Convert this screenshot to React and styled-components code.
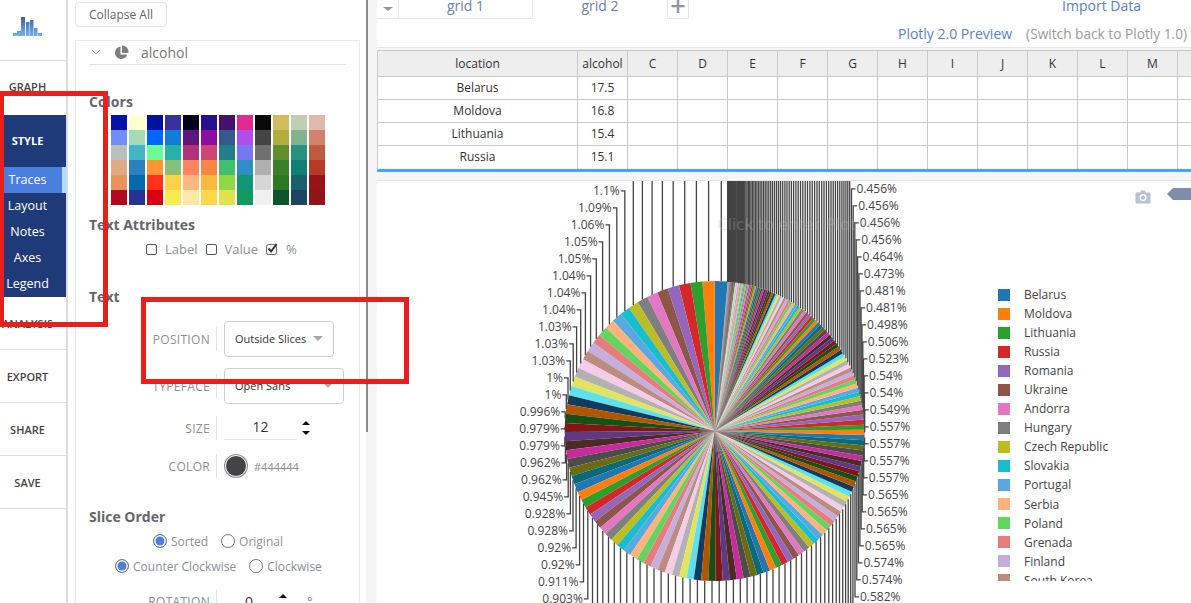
import React from 'react'
import styled, { createGlobalStyle } from 'styled-components'

const NAVY = '#1f3a78'
const LINK = '#5b80c9'
const LABEL = '#8a8f96'
const HEADING = '#63676d'
const BORDER = '#c9c9c9'

const SWATCHES = [
  ['#0512ab', '#ffffd0', '#00129b', '#37319a', '#03021a', '#2a0f8e', '#46116a', '#e02a8f', '#0a0a0a', '#d2bb5c', '#c0cfb4', '#e0b8ae'],
  ['#6f8ef8', '#a3dcb5', '#0066ff', '#137bd8', '#5f1780', '#8b0ea0', '#345a8d', '#b14ced', '#444444', '#b3ad3c', '#80b48e', '#d1836e'],
  ['#bdbdbd', '#40b7c8', '#66ff90', '#26b3a7', '#b03378', '#ce4673', '#217f8b', '#7878ee', '#707070', '#5f8f2d', '#26917e', '#c05a3c'],
  ['#dfab85', '#2c81bc', '#ff9635', '#8abf76', '#ff8460', '#f78645', '#40bf70', '#2e8fc4', '#b0b0b0', '#3a8028', '#0f8078', '#b63a25'],
  ['#e8925c', '#0769ad', '#ff301c', '#ffd147', '#ffb980', '#fdb93d', '#90d845', '#0f9878', '#d6d6d6', '#28791f', '#1a5f6a', '#961319'],
  ['#b00a1e', '#253494', '#d90413', '#f7ec4e', '#fde8a6', '#fbd84a', '#dfe24c', '#14995f', '#f0f0f0', '#0d552a', '#1e455f', '#92131a'],
]

const PIE_COLORS = [
  '#1f77b4', '#ff7f0e', '#2ca02c', '#d62728', '#9467bd', '#8c564b', '#e377c2', '#7f7f7f', '#bcbd22', '#17becf',
  '#58a9e2', '#ffb27b', '#5fd75f', '#e77c7c', '#c6aedc', '#bc8b81', '#f4cce8', '#b2b2b2', '#e2e35f', '#5fe0ed',
  '#103d5d', '#b35500', '#165016', '#811616', '#5e3a84', '#4a2c27', '#cb2a9c', '#4c4c4c', '#6b6b13', '#0d6975',
]

const LEGEND = [
  'Belarus', 'Moldova', 'Lithuania', 'Russia', 'Romania', 'Ukraine', 'Andorra', 'Hungary',
  'Czech Republic', 'Slovakia', 'Portugal', 'Serbia', 'Poland', 'Grenada', 'Finland', 'South Korea',
]

const COLUMNS = ['C', 'D', 'E', 'F', 'G', 'H', 'I', 'J', 'K', 'L', 'M', '']
const ROWS = [
  ['Belarus', '17.5'],
  ['Moldova', '16.8'],
  ['Lithuania', '15.4'],
  ['Russia', '15.1'],
]

const HEAD = [1.39, 1.33, 1.28, 1.26, 1.25, 1.2, 1.17, 1.15, 1.12]
const LEFT_LABELS = [1.1, 1.09, 1.06, 1.05, 1.05, 1.04, 1.04, 1.04, 1.03, 1.03, 1.03, 1, 1, 0.996, 0.979, 0.979, 0.962, 0.962, 0.945, 0.928, 0.928, 0.92, 0.92, 0.911, 0.903]
const RIGHT_LABELS = [0.456, 0.456, 0.456, 0.456, 0.464, 0.473, 0.481, 0.481, 0.498, 0.506, 0.523, 0.54, 0.54, 0.549, 0.557, 0.557, 0.557, 0.557, 0.565, 0.565, 0.565, 0.565, 0.574, 0.574, 0.582]
const LOGO_BARS = [[0, 4, 3], [4, 4, 5], [8, 4, 19], [13, 3.500, 14], [17, 3.500, 16], [21, 3.500, 8], [25, 4, 3]]

const CX = 715.7
const CY = 430
const R = 150

const buildSlices = () => {
  const mid = Array.from({ length: 47 }, (_, i) => 0.89 - (0.3 * i) / 46)
  const tail = Array.from({ length: 85 }, (_, i) => 0.005 + 0.44 * Math.pow(1 - i / 85, 1.32))
  const right = [...RIGHT_LABELS].reverse()
  const values = [...HEAD, ...LEFT_LABELS, ...mid, ...right, ...tail]
  const total = values.reduce((a, b) => a + b, 0)
  const rightStart = HEAD.length + LEFT_LABELS.length + mid.length
  let cum = -5
  return values.map((v, i) => {
    const start = cum
    cum += (v / total) * 360
    const a = ((start + cum) / 2) * (Math.PI / 180)
    const onLeft = (start + cum) / 2 < 180
    const x = CX - R * Math.sin(a)
    const y = CY - R * Math.cos(a)
    const labelY = onLeft ? 189.8 + 17 * (i - HEAD.length) : 595.8 - 17 * (i - rightStart)
    let label = null
    if (i >= HEAD.length && i < HEAD.length + LEFT_LABELS.length) label = LEFT_LABELS[i - HEAD.length]
    if (i >= rightStart && i < rightStart + right.length) label = right[i - rightStart]
    return { i, start, end: cum, x, y, labelY, onLeft, label }
  })
}

const wedge = ({ start, end }) => {
  const p = (deg) => {
    const a = (deg * Math.PI) / 180
    return `${(CX - R * Math.sin(a)).toFixed(2)} ${(CY - R * Math.cos(a)).toFixed(2)}`
  }
  return `M${CX} ${CY}L${p(start)}A${R} ${R} 0 0 0 ${p(end)}Z`
}

const SLICES = buildSlices()

const PieChart = () => (
  <ChartSvg viewBox="378 180 813 423">
    {SLICES.map((s) => (
      <path key={s.i} d={wedge(s)} fill={PIE_COLORS[s.i % 30]} />
    ))}
    {SLICES.map((s) => {
      const tick = s.onLeft ? -4 : 4
      return (
        <path
          key={s.i}
          d={`M${s.x.toFixed(1)} ${s.y.toFixed(1)}V${s.labelY.toFixed(1)}h${tick}`}
          fill="none"
          stroke="#444"
          strokeWidth="1.3"
        />
      )
    })}
    {SLICES.filter((s) => s.label !== null).map((s) => (
      <ChartLabel
        key={s.i}
        x={s.onLeft ? s.x - 5 : s.x + 5}
        y={s.labelY + 4}
        textAnchor={s.onLeft ? 'end' : 'start'}
      >
        {s.label}%
      </ChartLabel>
    ))}
    <PlotTitle x="805" y="229" textAnchor="middle">Click to enter Plot title</PlotTitle>
  </ChartSvg>
)

const Logo = () => (
  <svg width="29" height="19" viewBox="0 0 29 19">
    <defs>
      <linearGradient id="logoBars" x1="0" y1="0" x2="0" y2="19" gradientUnits="userSpaceOnUse">
        <stop offset="0" stopColor="#3d628f" />
        <stop offset="1" stopColor="#6fb2f7" />
      </linearGradient>
    </defs>
    {LOGO_BARS.map(([x, w, h]) => (
      <rect key={x} x={x} y={19 - h} width={w} height={h} fill="url(#logoBars)" />
    ))}
  </svg>
)

const PieIcon = () => (
  <svg width="15" height="15" viewBox="0 0 15 15">
    <path d="M6.5 1.5a6.3 6.3 0 1 0 6.8 8H6.5z" fill="#7f7f7f" />
    <path d="M8 0.5a6.5 6.5 0 0 1 6.5 7.5H8z" fill="#7f7f7f" />
  </svg>
)

const Chevron = () => (
  <svg width="10" height="6" viewBox="0 0 10 6">
    <path d="M1 1l4 4 4-4" fill="none" stroke="#999" strokeWidth="1" />
  </svg>
)

const Spinner = () => (
  <SpinnerBox>
    <svg width="8" height="14" viewBox="0 0 8 14">
      <path d="M4 0l4 4H0zM4 14l4-4H0z" fill="#111" />
    </svg>
  </SpinnerBox>
)

const Check = () => (
  <svg width="12" height="12" viewBox="0 0 12 12">
    <rect x="0.5" y="1.5" width="10" height="10" rx="2" fill="#f4f4f4" stroke="#666" />
    <path d="M2.5 5.5l2.6 3 5.5-7.5" fill="none" stroke="#333" strokeWidth="2" />
  </svg>
)

const Camera = () => (
  <svg width="16" height="14" viewBox="0 0 16 14">
    <path d="M1.5 2.5H5L6 0.5h4l1 2h3.500a1 1 0 0 1 1 1v9a1 1 0 0 1-1 1h-13a1 1 0 0 1-1-1v-9a1 1 0 0 1 1-1z" fill="#b9c1d5" />
    <circle cx="8" cy="7.600" r="3.500" fill="#fff" />
    <circle cx="8" cy="7.600" r="2.200" fill="#b9c1d5" />
  </svg>
)

const App = () => (
  <Page>
    <GlobalStyle />
    <Rail>
      <LogoBox><Logo /></LogoBox>
      <RailItem $height={54} $lift={3}>GRAPH</RailItem>
      <StyleGroup>
        <StyleTitle>STYLE</StyleTitle>
        <SubItem $active>Traces</SubItem>
        <SubItem>Layout</SubItem>
        <SubItem>Notes</SubItem>
        <SubItem>Axes</SubItem>
        <SubItem>Legend</SubItem>
      </StyleGroup>
      <RailItem $height={53} $line>ANALYSIS</RailItem>
      <RailItem $height={53} $line>EXPORT</RailItem>
      <RailItem $height={53} $line>SHARE</RailItem>
      <RailItem $height={53} $line>SAVE</RailItem>
    </Rail>

    <Panel>
      <CollapseButton>Collapse All</CollapseButton>
      <Card>
        <CardHeader>
          <Chevron />
          <PieIcon />
          <CardName>alcohol</CardName>
        </CardHeader>
        <Heading $top={27}>Colors</Heading>
        <SwatchGrid>
          {SWATCHES.flat().map((c, i) => (
            <Swatch key={i} $color={c} />
          ))}
        </SwatchGrid>
        <Heading $top={10}>Text Attributes</Heading>
        <CheckRow>
          <CheckItem><EmptyBox />Label</CheckItem>
          <CheckItem><EmptyBox />Value</CheckItem>
          <CheckItem><Check />%</CheckItem>
        </CheckRow>
        <Heading $top={28}>Text</Heading>
        <Field $top={14} $height={36} label="POSITION">
          <Select $width={110}>Outside Slices<Caret /></Select>
        </Field>
        <Field $top={11} $height={36} label="TYPEFACE">
          <Select $width={120}>Open Sans<Caret /></Select>
        </Field>
        <Field $top={12} $height={24} label="SIZE">
          <SizeInput>12</SizeInput>
          <Spinner />
        </Field>
        <Field $top={14} $height={24} label="COLOR">
          <ColorDot />
          <HexText>#444444</HexText>
        </Field>
        <Heading $top={29}>Slice Order</Heading>
        <RadioRow $top={4} $left={64}>
          <RadioItem><Radio $on />Sorted</RadioItem>
          <RadioItem><Radio />Original</RadioItem>
        </RadioRow>
        <RadioRow $top={5} $left={26}>
          <RadioItem><Radio $on />Counter Clockwise</RadioItem>
          <RadioItem><Radio />Clockwise</RadioItem>
        </RadioRow>
        <Field $top={13} $height={24} label="ROTATION">
          <RotationValue>0</RotationValue>
          <Spinner />
          <Degree>°</Degree>
        </Field>
      </Card>
    </Panel>
    <ScrollGutter><ScrollThumb /></ScrollGutter>

    <Main>
      <TabBar>
        <TabMenu><TabCaret /></TabMenu>
        <Tab>grid 1</Tab>
        <Tab $active>grid 2</Tab>
        <AddTab>+</AddTab>
        <ImportLink>Import Data</ImportLink>
      </TabBar>
      <PreviewBar>
        <PreviewLink>Plotly 2.0 Preview</PreviewLink>
        <SwitchBack>(Switch back to Plotly 1.0)</SwitchBack>
      </PreviewBar>
      <Sheet>
        <SheetRow $header>
          <Cell $header $width={200}>location</Cell>
          <Cell $header $width={50}>alcohol</Cell>
          {COLUMNS.map((c, i) => <Cell key={i} $header $width={50}>{c}</Cell>)}
        </SheetRow>
        {ROWS.map(([name, value]) => (
          <SheetRow key={name}>
            <Cell $width={200}>{name}</Cell>
            <Cell $width={50}>{value}</Cell>
            {COLUMNS.map((c, i) => <Cell key={i} $width={50} />)}
          </SheetRow>
        ))}
      </Sheet>
      <Plot>
        <PieChart />
        <CameraBox><Camera /></CameraBox>
        <ModeTag />
        <Legend>
          {LEGEND.map((name, i) => (
            <LegendRow key={name}>
              <LegendSwatch $color={PIE_COLORS[i]} />
              {name}
            </LegendRow>
          ))}
        </Legend>
      </Plot>
    </Main>

    <Annotation $left={-1} $top={91} $width={108.5} $height={236} />
    <Annotation $left={141} $top={297} $width={268} $height={87} />
  </Page>
)

const GlobalStyle = createGlobalStyle`
  html, body {
    margin: 0;
    height: 603px;
    overflow: hidden;
    background: #fff;
    font-family: "Open Sans", "Liberation Sans", sans-serif;
  }
`
const Page = styled.div`
  position: relative;
  display: flex;
  width: 1191px;
  height: 603px;
  overflow: hidden;
`
const Rail = styled.div`
  flex: 0 0 66px;
  border-right: 2px solid #dcdcdc;
  display: flex;
  flex-direction: column;
`
const LogoBox = styled.div`
  height: 60px;
  border-bottom: 1px solid #dddddd;
  padding-right: 11px;
  display: flex;
  justify-content: center;
  align-items: flex-start;
  & > svg {
    margin-top: 17px;
  }
`
const RailItem = styled.div`
  height: ${(p) => p.$height}px;
  box-sizing: border-box;
  padding: 0 11px ${(p) => p.$lift || 0}px 0;
  display: flex;
  align-items: center;
  justify-content: center;
  font-size: 11px;
  font-weight: 600;
  color: #444;
  border-bottom: ${(p) => (p.$line ? '1px solid #dddddd' : '0')};
`
const StyleGroup = styled.div`
  background: ${NAVY};
  height: 182px;
`
const StyleTitle = styled.div`
  height: 52px;
  box-sizing: border-box;
  padding: 0 11px 2px 0;
  display: flex;
  align-items: center;
  justify-content: center;
  color: #fff;
  font-size: 11px;
  font-weight: 700;
`
const SubItem = styled.div`
  height: 26px;
  box-sizing: border-box;
  padding: 0 7px 2px 0;
  display: flex;
  align-items: center;
  justify-content: center;
  font-size: 12.5px;
  color: #fff;
  background: ${(p) => (p.$active ? '#4a7fe0' : 'transparent')};
  border-right: 4px solid ${(p) => (p.$active ? '#aedcfb' : 'transparent')};
`
const Panel = styled.div`
  flex: 0 0 298px;
  box-sizing: border-box;
  padding: 2px 6px 0 7px;
  background: #fff;
`
const CollapseButton = styled.div`
  width: 92px;
  height: 25px;
  box-sizing: border-box;
  border: 1px solid #e4e4e4;
  border-radius: 4px;
  display: flex;
  align-items: center;
  justify-content: center;
  font-size: 12px;
  color: #666;
`
const Card = styled.div`
  margin-top: 13px;
  height: 620px;
  border: 1px solid #ebebeb;
  box-sizing: border-box;
  padding: 0 13px;
`
const CardHeader = styled.div`
  height: 24px;
  padding-bottom: 1px;
  box-sizing: border-box;
  margin-bottom: 1px;
  border-bottom: 1px solid #e4e4e4;
  display: flex;
  align-items: center;
  & > svg:first-child {
    margin-left: 2px;
  }
  & > svg:nth-child(2) {
    margin-left: 13px;
  }
`
const CardName = styled.span`
  margin-left: 12px;
  font-size: 14px;
  color: #777;
`
const Heading = styled.div`
  margin-top: ${(p) => p.$top}px;
  height: 20px;
  line-height: 20px;
  font-size: 14px;
  font-weight: 700;
  color: ${HEADING};
`
const SwatchGrid = styled.div`
  margin: 3px 0 0 22px;
  display: grid;
  grid-template-columns: repeat(12, 16px);
  grid-auto-rows: 15px;
  column-gap: 2px;
`
const Swatch = styled.div`
  background: ${(p) => p.$color};
`
const CheckRow = styled.div`
  margin: 4px 0 0 57px;
  height: 20px;
  display: flex;
  gap: 8px;
`
const CheckItem = styled.label`
  display: flex;
  align-items: center;
  gap: 8px;
  font-size: 13px;
  color: ${LABEL};
`
const EmptyBox = styled.span`
  width: 11px;
  height: 11px;
  box-sizing: border-box;
  border: 1px solid #555;
  border-radius: 2px;
  background: #fff;
`
const FieldRow = styled.div`
  margin-top: ${(p) => p.$top}px;
  height: ${(p) => p.$height}px;
  display: flex;
  align-items: center;
`
const FieldLabel = styled.div`
  width: 127px;
  padding-right: 6px;
  box-sizing: border-box;
  text-align: right;
  font-size: 12px;
  letter-spacing: 0.3px;
  color: ${LABEL};
`
const FieldLine = styled.div`
  width: 1px;
  height: 24px;
  margin-right: 7px;
  background: #e4e4e4;
`
const Field = ({ label, children, ...rest }) => (
  <FieldRow {...rest}>
    <FieldLabel>{label}</FieldLabel>
    <FieldLine />
    {children}
  </FieldRow>
)
const Select = styled.div`
  width: ${(p) => p.$width}px;
  height: 36px;
  box-sizing: border-box;
  border: 1px solid #cfcfcf;
  border-radius: 4px;
  padding: 0 10px 2px;
  display: flex;
  align-items: center;
  justify-content: space-between;
  font-size: 11px;
  color: #333;
`
const Caret = styled.span`
  width: 0;
  height: 0;
  border-left: 5px solid transparent;
  border-right: 5px solid transparent;
  border-top: 5px solid #aaa;
`
const SizeInput = styled.div`
  width: 73px;
  height: 24px;
  box-sizing: border-box;
  border-bottom: 1px solid #e4e4e4;
  text-align: center;
  font-size: 14px;
  line-height: 22px;
  color: #333;
`
const SpinnerBox = styled.span`
  display: flex;
  margin-left: 5px;
`
const ColorDot = styled.span`
  width: 20px;
  height: 20px;
  margin-left: 1px;
  border-radius: 50%;
  background: #444;
  border: 1px solid #fff;
  box-shadow: 0 0 0 1px #8a8f9c;
`
const HexText = styled.span`
  margin-left: 7px;
  font-size: 11px;
  color: #8a8a8a;
`
const RadioRow = styled.div`
  margin: ${(p) => p.$top}px 0 0 ${(p) => p.$left}px;
  height: 20px;
  display: flex;
  gap: 13px;
`
const RadioItem = styled.label`
  display: flex;
  align-items: center;
  gap: 4px;
  font-size: 12px;
  color: ${LABEL};
`
const Radio = styled.span`
  width: 14px;
  height: 14px;
  box-sizing: border-box;
  border-radius: 50%;
  border: 1px solid #777;
  background: ${(p) => (p.$on ? '#4a7fe0' : '#fff')};
  box-shadow: ${(p) => (p.$on ? 'inset 0 0 0 1.5px #fff' : 'none')};
`
const RotationValue = styled.span`
  width: 50px;
  text-align: center;
  font-size: 14px;
  color: #333;
`
const Degree = styled.span`
  margin-left: 20px;
  font-size: 13px;
  color: #777;
`
const ScrollGutter = styled.div`
  flex: 0 0 11px;
  background: #f5f5f5;
`
const ScrollThumb = styled.div`
  width: 2px;
  height: 432px;
  background: #8c8c8c;
`
const Main = styled.div`
  flex: 0 0 814px;
  min-width: 0;
  display: flex;
  flex-direction: column;
  background: #f5f5f5;
`
const TabBar = styled.div`
  height: 19px;
  background: #fff;
  display: flex;
  overflow: hidden;
`
const TabMenu = styled.div`
  width: 21px;
  height: 18px;
  border-right: 1px solid #e8e8e8;
  border-bottom: 1px solid #e8e8e8;
  display: flex;
  justify-content: center;
`
const TabCaret = styled.span`
  width: 0;
  height: 0;
  margin-top: 7px;
  border-left: 5px solid transparent;
  border-right: 5px solid transparent;
  border-top: 4px solid #8b96ad;
`
const Tab = styled.div`
  width: 134px;
  height: 19px;
  box-sizing: border-box;
  border-bottom: ${(p) => (p.$active ? '0' : '1px solid #e8e8e8')};
  border-right: ${(p) => (p.$active ? '0' : '1px solid #e8e8e8')};
  text-align: center;
  font-size: 14px;
  line-height: 11px;
  color: #6f7f9f;
`
const AddTab = styled.div`
  width: 22px;
  height: 19px;
  box-sizing: border-box;
  border-left: 1px solid #e8e8e8;
  border-right: 1px solid #e8e8e8;
  border-bottom: 1px solid #e8e8e8;
  text-align: center;
  font-size: 27px;
  font-weight: 600;
  line-height: 12px;
  color: #8b96ad;
`
const ImportLink = styled.div`
  margin-left: auto;
  margin-right: 50px;
  font-size: 14px;
  line-height: 11px;
  color: ${LINK};
`
const PreviewBar = styled.div`
  height: 28px;
  background: #fff;
  border-bottom: 1px solid #e8e8e8;
  display: flex;
  align-items: center;
  justify-content: flex-end;
  padding-right: 4px;
  gap: 14px;
  font-size: 14px;
`
const PreviewLink = styled.span`
  color: ${LINK};
`
const SwitchBack = styled.span`
  font-size: 13.7px;
  color: #9a9a9a;
`
const Sheet = styled.div`
  margin-top: 2px;
  background: #fff;
  border-top: 1px solid ${BORDER};
  border-bottom: 3px solid #42a5f5;
  border-left: 1px solid ${BORDER};
`
const SheetRow = styled.div`
  display: flex;
  height: ${(p) => (p.$header ? 26 : 23)}px;
  box-sizing: border-box;
  background: ${(p) => (p.$header ? '#eeeeee' : '#fff')};
  border-bottom: 1px solid ${BORDER};
  &:last-child {
    border-bottom: 0;
  }
`
const Cell = styled.div`
  flex: 0 0 ${(p) => p.$width}px;
  box-sizing: border-box;
  padding-bottom: ${(p) => (p.$header ? 0 : 2)}px;
  border-right: 1px solid ${BORDER};
  display: flex;
  align-items: center;
  justify-content: center;
  font-size: 12px;
  color: #333;
`
const Plot = styled.div`
  position: relative;
  margin-top: 8px;
  flex: 1;
  background: #fff;
  border-top: 1px solid #e8e8e8;
  overflow: hidden;
`
const ChartSvg = styled.svg`
  display: block;
  width: 813px;
  height: 423px;
`
const ChartLabel = styled.text`
  font-size: 12px;
  fill: #444;
`
const PlotTitle = styled.text`
  font-size: 17px;
  fill: #bbb;
  opacity: 0.3;
`
const CameraBox = styled.div`
  position: absolute;
  right: 40px;
  top: 6px;
`
const ModeTag = styled.div`
  position: absolute;
  right: 0;
  top: 7px;
  width: 24px;
  height: 12px;
  background: #7f8dab;
  clip-path: polygon(25% 0, 100% 0, 100% 100%, 25% 100%, 0 50%);
`
const Legend = styled.div`
  position: absolute;
  left: 621px;
  top: 104px;
  height: 296px;
  overflow: hidden;
`
const LegendRow = styled.div`
  height: 19.05px;
  display: flex;
  align-items: center;
  gap: 14px;
  font-size: 12px;
  color: #444;
`
const LegendSwatch = styled.span`
  width: 12px;
  height: 12px;
  background: ${(p) => p.$color};
`
const Annotation = styled.div`
  position: absolute;
  left: ${(p) => p.$left}px;
  top: ${(p) => p.$top}px;
  width: ${(p) => p.$width}px;
  height: ${(p) => p.$height}px;
  box-sizing: border-box;
  border: 5px solid #e8201c;
`

export default App
